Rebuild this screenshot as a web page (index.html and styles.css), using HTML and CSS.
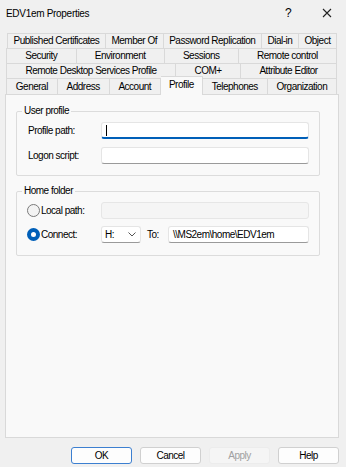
FILE: index.html
```html
<!DOCTYPE html>
<html lang="en">
<head>
  <meta charset="UTF-8" />
  <title>EDV1em Properties</title>
  <link rel="stylesheet" href="styles.css">
</head>
<body>
  <div class="dialog">
    <div class="titlebar">
      <span class="title">EDV1em Properties</span>
      <span class="tb-btn">?</span>
      <span class="tb-btn">
        <svg width="10" height="10" viewBox="0 0 10 10"><path d="M1 1 L9 9 M9 1 L1 9" stroke="#222" stroke-width="1.1" fill="none"/></svg>
      </span>
    </div>

    <div class="tabs">
      <div class="tab-row row1">
        <span class="tab">Published Certificates</span>
        <span class="tab">Member Of</span>
        <span class="tab">Password Replication</span>
        <span class="tab">Dial-in</span>
        <span class="tab">Object</span>
      </div>
      <div class="tab-row">
        <span class="tab">Security</span>
        <span class="tab">Environment</span>
        <span class="tab">Sessions</span>
        <span class="tab">Remote control</span>
      </div>
      <div class="tab-row">
        <span class="tab">Remote Desktop Services Profile</span>
        <span class="tab">COM+</span>
        <span class="tab">Attribute Editor</span>
      </div>
      <div class="tab-row row4">
        <span class="tab">General</span>
        <span class="tab">Address</span>
        <span class="tab">Account</span>
        <span class="tab active">Profile</span>
        <span class="tab">Telephones</span>
        <span class="tab">Organization</span>
      </div>
    </div>

    <div class="pane">
      <fieldset class="group">
        <legend>User profile</legend>
        <div class="form-grid">
          <label>Profile path:</label>
          <div class="field focused"><span class="caret"></span></div>
          <label>Logon script:</label>
          <div class="field"></div>
        </div>
      </fieldset>

      <fieldset class="group home">
        <legend>Home folder</legend>
        <div class="home-grid">
          <div class="opt"><span class="radio"></span><label>Local path:</label></div>
          <div class="field disabled span3"></div>
          <div class="opt"><span class="radio checked"></span><label>Connect:</label></div>
          <div class="combo">
            <span>H:</span>
            <svg width="8" height="5" viewBox="0 0 8 5"><path d="M0.5 0.5 L4 4 L7.5 0.5" stroke="#555" stroke-width="1" fill="none"/></svg>
          </div>
          <label class="to">To:</label>
          <div class="field">\\MS2em\home\EDV1em</div>
        </div>
      </fieldset>
    </div>

    <div class="buttons">
      <button class="btn default">OK</button>
      <button class="btn">Cancel</button>
      <button class="btn" disabled>Apply</button>
      <button class="btn">Help</button>
    </div>
  </div>
</body>
</html>
```

FILE: styles.css
```css
* {
  box-sizing: border-box;
}

body {
  margin: 0;
  background: #f0f0f0;
  font-family: "Liberation Sans", Arial, sans-serif;
  font-size: 10px;
  letter-spacing: -0.5px;
  color: #000;
}

.dialog {
  width: 346px;
  height: 467px;
  display: flex;
  flex-direction: column;
}

/* title bar */
.titlebar {
  height: 26px;
  display: flex;
  align-items: center;
  padding: 0 9px 0 6px;
}

.title {
  flex: 1;
  letter-spacing: -0.3px;
}

.tb-btn {
  width: 20px;
  text-align: center;
  font-size: 12px;
  display: flex;
  justify-content: center;
}

.tb-btn + .tb-btn {
  margin-left: 19px;
}

/* tabs */
.tabs {
  margin-top: 7px;
  padding: 0 9px 0 6px;
}

.tab-row {
  display: flex;
  height: 15px;
}

.row1 {
  margin-left: 1px;
}

.row4 {
  height: 16px;
}

.tab {
  flex: 1 1 auto;
  padding: 0 5px;
  border: 1px solid #d9d9d9;
  border-left: none;
  border-bottom: none;
  text-align: center;
  line-height: 14px;
  white-space: nowrap;
  background: #f0f0f0;
}

.tab:first-child {
  border-left: 1px solid #d9d9d9;
}

.row4 .tab {
  line-height: 15px;
}

.tab.active {
  flex-grow: 0.8;
  margin-top: -2px;
  height: 19px;
  line-height: 15px;
  background: #f9f9f9;
  position: relative;
  z-index: 1;
}

/* page */
.pane {
  margin: 0 7px 0 5px;
  height: 344px;
  border: 1px solid #d9d9d9;
  background: #f9f9f9;
  padding: 0 18px 0 10px;
}

.group {
  margin: 10px 0 0;
  padding: 5px 10px 11px 11px;
  border: 1px solid #dcdcdc;
  border-radius: 2px;
}

.group.home {
  margin-top: 9px;
  padding-bottom: 12px;
}

.group legend {
  padding: 0 2px;
  margin-left: -6px;
  line-height: 12px;
}

.form-grid {
  display: grid;
  grid-template-columns: 73px 1fr;
  grid-auto-rows: 17px;
  row-gap: 8px;
  align-items: center;
}

.field {
  height: 17px;
  background: #fff;
  border: 1px solid #e5e5e5;
  border-bottom-color: #9a9a9a;
  border-radius: 3px;
  padding: 0 4px;
  line-height: 15px;
  white-space: nowrap;
}

.field.focused {
  border-bottom: 2px solid #005fb8;
  display: flex;
  align-items: center;
}

.caret {
  width: 1px;
  height: 11px;
  background: #000;
}

.field.disabled {
  background: #f5f5f5;
  border-color: #e6e6e6;
}

.home-grid {
  display: grid;
  grid-template-columns: 73px 40px 27px 1fr;
  grid-auto-rows: 17px;
  row-gap: 7px;
  align-items: center;
}

.span3 {
  grid-column: span 3;
}

.opt {
  display: flex;
  align-items: center;
  margin-left: -1px;
}

.opt label {
  margin-left: 1px;
}

.radio {
  width: 13px;
  height: 13px;
  border-radius: 50%;
  border: 1px solid #7a7a7a;
  background: #f3f3f3;
}

.radio.checked {
  border: 4px solid #005fb8;
  background: #fff;
}

.combo {
  height: 17px;
  background: #fff;
  border: 1px solid #e5e5e5;
  border-bottom-color: #9a9a9a;
  border-radius: 3px;
  display: flex;
  align-items: center;
  justify-content: space-between;
  padding: 0 4px 0 3px;
}

.to {
  padding-left: 6px;
}

/* bottom buttons */
.buttons {
  display: flex;
  justify-content: flex-end;
  gap: 8px;
  margin-top: 9px;
  padding-right: 7px;
}

.btn {
  width: 61px;
  height: 17px;
  padding: 0;
  font-family: inherit;
  font-size: 10px;
  letter-spacing: -0.5px;
  color: #000;
  background: #fdfdfd;
  border: 1px solid #d0d0d0;
  border-radius: 3px;
}

.btn.default {
  border-color: #3c7fd0;
}

.btn:disabled {
  background: #f5f5f5;
  border-color: #ececec;
  color: #a0a0a0;
}
```
